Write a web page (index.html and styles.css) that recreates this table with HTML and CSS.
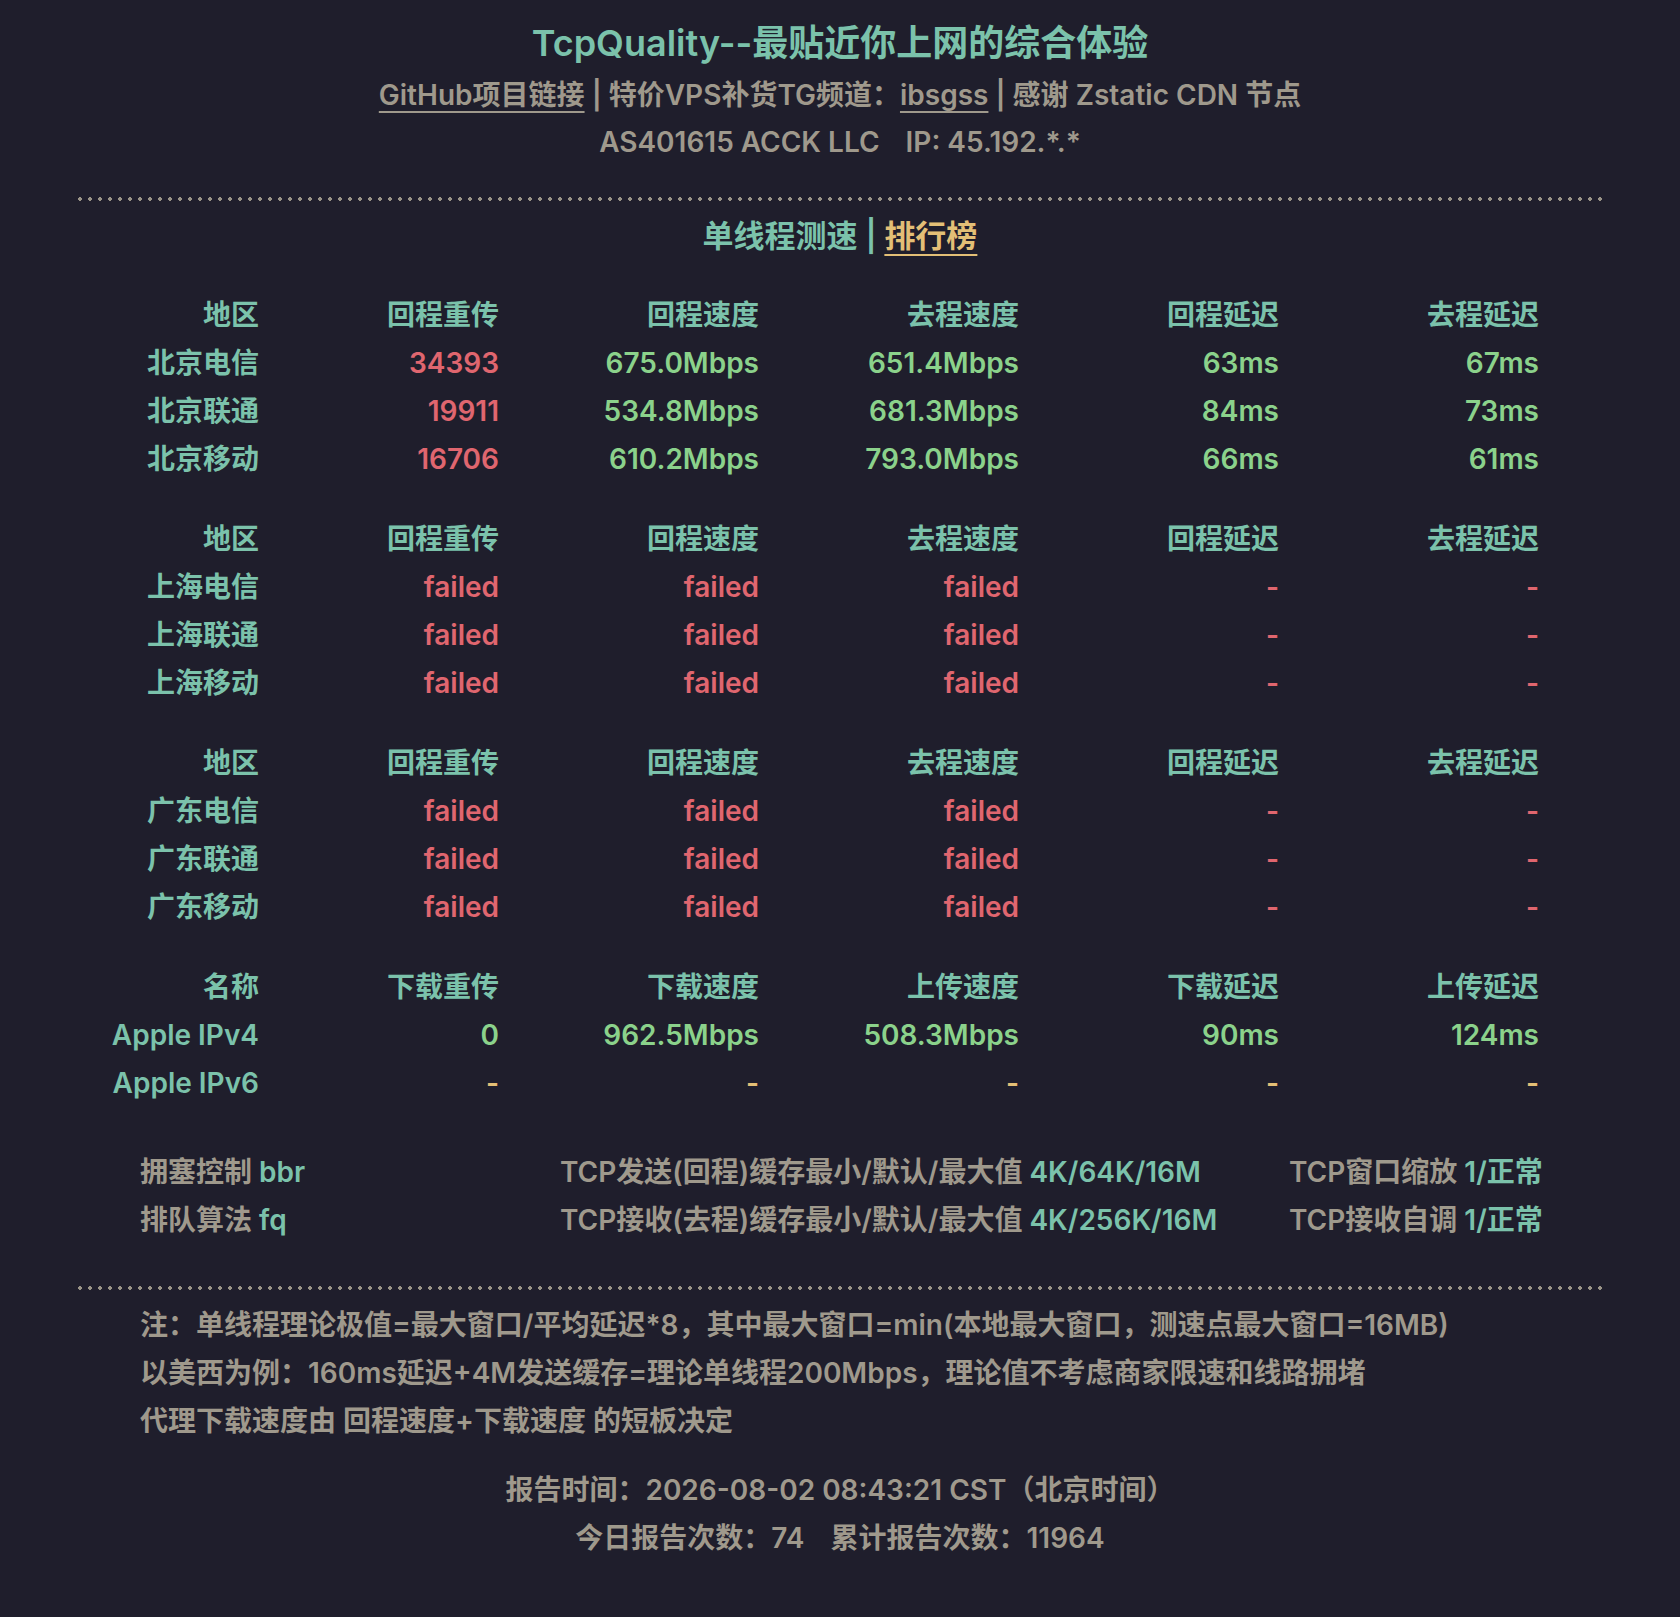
FILE: index.html
```html
<!DOCTYPE html>
<html lang="zh-CN">
<head>
<meta charset="utf-8">
<title>TcpQuality</title>
<link rel="stylesheet" href="styles.css">
</head>
<body>
<div class="page">
  <header class="head">
    <h1 class="title">TcpQuality--最贴近你上网的综合体验</h1>
    <p class="sub"><a class="link" href="#">GitHub项目链接</a> <span class="bar">|</span> 特价VPS补货TG频道：<a class="link" href="#">ibsgss</a> <span class="bar">|</span> 感谢 Zstatic CDN 节点</p>
    <p class="sub">AS401615 ACCK LLC<span class="gap">IP: 45.192.*.*</span></p>
  </header>

  <div class="dots"></div>

  <h2 class="section">单线程测速 <span class="vbar">|</span> <a class="rank" href="#">排行榜</a></h2>

  <div class="grid">
    <div class="h">地区</div><div class="h">回程重传</div><div class="h">回程速度</div><div class="h">去程速度</div><div class="h">回程延迟</div><div class="h">去程延迟</div>
    <div class="n">北京电信</div><div class="r">34393</div><div class="g">675.0Mbps</div><div class="g">651.4Mbps</div><div class="g">63ms</div><div class="g">67ms</div>
    <div class="n">北京联通</div><div class="r">19911</div><div class="g">534.8Mbps</div><div class="g">681.3Mbps</div><div class="g">84ms</div><div class="g">73ms</div>
    <div class="n">北京移动</div><div class="r">16706</div><div class="g">610.2Mbps</div><div class="g">793.0Mbps</div><div class="g">66ms</div><div class="g">61ms</div>
  </div>

  <div class="grid">
    <div class="h">地区</div><div class="h">回程重传</div><div class="h">回程速度</div><div class="h">去程速度</div><div class="h">回程延迟</div><div class="h">去程延迟</div>
    <div class="n">上海电信</div><div class="r">failed</div><div class="r">failed</div><div class="r">failed</div><div class="r">-</div><div class="r">-</div>
    <div class="n">上海联通</div><div class="r">failed</div><div class="r">failed</div><div class="r">failed</div><div class="r">-</div><div class="r">-</div>
    <div class="n">上海移动</div><div class="r">failed</div><div class="r">failed</div><div class="r">failed</div><div class="r">-</div><div class="r">-</div>
  </div>

  <div class="grid">
    <div class="h">地区</div><div class="h">回程重传</div><div class="h">回程速度</div><div class="h">去程速度</div><div class="h">回程延迟</div><div class="h">去程延迟</div>
    <div class="n">广东电信</div><div class="r">failed</div><div class="r">failed</div><div class="r">failed</div><div class="r">-</div><div class="r">-</div>
    <div class="n">广东联通</div><div class="r">failed</div><div class="r">failed</div><div class="r">failed</div><div class="r">-</div><div class="r">-</div>
    <div class="n">广东移动</div><div class="r">failed</div><div class="r">failed</div><div class="r">failed</div><div class="r">-</div><div class="r">-</div>
  </div>

  <div class="grid">
    <div class="h">名称</div><div class="h">下载重传</div><div class="h">下载速度</div><div class="h">上传速度</div><div class="h">下载延迟</div><div class="h">上传延迟</div>
    <div class="n">Apple IPv4</div><div class="g">0</div><div class="g">962.5Mbps</div><div class="g">508.3Mbps</div><div class="g">90ms</div><div class="g">124ms</div>
    <div class="n">Apple IPv6</div><div class="y">-</div><div class="y">-</div><div class="y">-</div><div class="y">-</div><div class="y">-</div>
  </div>

  <div class="sys">
    <div>拥塞控制 <span class="v">bbr</span></div>
    <div>TCP发送(回程)缓存最小/默认/最大值 <span class="v">4K/64K/16M</span></div>
    <div>TCP窗口缩放 <span class="v">1/正常</span></div>
    <div>排队算法 <span class="v">fq</span></div>
    <div>TCP接收(去程)缓存最小/默认/最大值 <span class="v">4K/256K/16M</span></div>
    <div>TCP接收自调 <span class="v">1/正常</span></div>
  </div>

  <div class="dots dots2"></div>

  <div class="notes">
    <p>注：单线程理论极值=最大窗口/平均延迟*8，其中最大窗口=min(本地最大窗口，测速点最大窗口=16MB)</p>
    <p>以美西为例：160ms延迟+4M发送缓存=理论单线程200Mbps，理论值不考虑商家限速和线路拥堵</p>
    <p>代理下载速度由 回程速度+下载速度 的短板决定</p>
  </div>

  <footer class="foot">
    <p>报告时间：2026-08-02 08:43:21 CST（北京时间）</p>
    <p>今日报告次数：74<span class="gap">累计报告次数：11964</span></p>
  </footer>
</div>
</body>
</html>
```

FILE: styles.css
```css
html, body {
  margin: 0;
  padding: 0;
  background: #1f1e2c;
}
body {
  font-family: Inter, "Noto Sans CJK SC", sans-serif;
  font-weight: 600;
  font-size: 28px;
  color: #9f998c;
}
.page {
  width: 1524px;
  margin: 0 auto;
  padding-top: 15px;
  padding-bottom: 55px;
}
.head {
  text-align: center;
}
.title {
  margin: 0;
  font-size: 36px;
  line-height: 57px;
  font-weight: 600;
  color: #7bc2ab;
}
.sub {
  margin: 0;
  line-height: 47px;
}
.link {
  color: #9f998c;
  text-decoration: underline;
  text-decoration-thickness: 2px;
  text-underline-offset: 6px;
}
.bar {
  color: #9f998c;
}
.gap {
  margin-left: 26px;
}
.dots {
  height: 4px;
  margin-top: 31px;
  background-image: radial-gradient(circle at 2px 2px, #9a9488 1.7px, transparent 2.1px);
  background-size: 10px 4px;
  background-repeat: repeat-x;
}
.section {
  margin: 11px 0 0;
  text-align: center;
  font-size: 31px;
  line-height: 48px;
  font-weight: 600;
  color: #7bc2ab;
}
.vbar {
  color: #7bc2ab;
}
.rank {
  color: #e3bf76;
  text-decoration: underline;
  text-decoration-thickness: 2px;
  text-underline-offset: 7px;
}
.grid {
  display: grid;
  grid-template-columns: 181px 240px 260px 260px 260px 260px;
  grid-auto-rows: 48px;
  line-height: 48px;
  text-align: right;
  margin-top: 32px;
}
.section + .grid {
  margin-top: 31px;
}
.grid > div {
  white-space: nowrap;
}
.h, .n {
  color: #7bc2ab;
}
.r {
  color: #e0666f;
}
.g {
  color: #8bd28b;
}
.y {
  color: #e3bf76;
}
.sys {
  display: grid;
  grid-template-columns: 420px 729px 251px;
  grid-auto-rows: 48px;
  line-height: 48px;
  margin: 41px 0 0 62px;
  white-space: nowrap;
}
.v {
  color: #7bc2ab;
}
.dots2 {
  margin-top: 42px;
}
.notes {
  margin: 11px 0 0 62px;
}
.notes p {
  margin: 0;
  line-height: 48px;
  white-space: nowrap;
}
.foot {
  margin-top: 21px;
  text-align: center;
}
.foot p {
  margin: 0;
  line-height: 48px;
}
```
